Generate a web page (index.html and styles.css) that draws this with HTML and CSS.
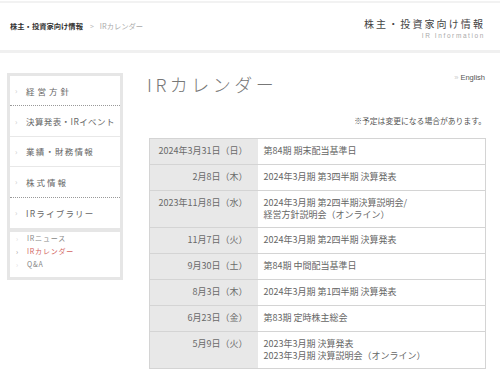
FILE: index.html
```html
<!DOCTYPE html>
<html lang="ja">
<head>
<meta charset="utf-8">
<title>IRカレンダー</title>
<link rel="stylesheet" href="styles.css">
</head>
<body>
<header class="header">
  <div class="crumbs">
    <a class="crumb-home">株主・投資家向け情報</a>
    <span class="crumb-sep">&gt;</span>
    <span class="crumb-current">IRカレンダー</span>
  </div>
  <div class="brand">
    <div class="brand-ja">株主・投資家向け情報</div>
    <div class="brand-en">IR Information</div>
  </div>
</header>
<div class="page">
  <nav class="side">
    <ul class="side-main">
      <li class="side-item dotted wide"><span class="mark">›</span>経営方針</li>
      <li class="side-item solid narrow"><span class="mark">›</span>決算発表・IRイベント</li>
      <li class="side-item solid"><span class="mark">›</span>業績・財務情報</li>
      <li class="side-item dotted mid"><span class="mark">›</span>株式情報</li>
      <li class="side-item"><span class="mark">›</span>IRライブラリー</li>
    </ul>
    <ul class="side-sub">
      <li class="sub-item"><span class="submark">›</span>IRニュース</li>
      <li class="sub-item active"><span class="submark">›</span>IRカレンダー</li>
      <li class="sub-item"><span class="submark">›</span>Q&amp;A</li>
    </ul>
  </nav>
  <main class="content">
    <div class="title-row">
      <h1 class="title">IRカレンダー</h1>
      <a class="lang"><span class="lang-mark">»</span> English</a>
    </div>
    <p class="note">※予定は変更になる場合があります。</p>
    <table class="cal">
      <tr><th>2024年3月31日（日）</th><td>第84期 期末配当基準日</td></tr>
      <tr><th>2月8日（木）</th><td>2024年3月期 第3四半期 決算発表</td></tr>
      <tr class="tall"><th>2023年11月8日（水）</th><td>2024年3月期 第2四半期決算説明会/<br>経営方針説明会（オンライン）</td></tr>
      <tr><th>11月7日（火）</th><td>2024年3月期 第2四半期 決算発表</td></tr>
      <tr><th>9月30日（土）</th><td>第84期 中間配当基準日</td></tr>
      <tr><th>8月3日（木）</th><td>2024年3月期 第1四半期 決算発表</td></tr>
      <tr><th>6月23日（金）</th><td>第83期 定時株主総会</td></tr>
      <tr class="tall"><th>5月9日（火）</th><td>2023年3月期 決算発表<br>2023年3月期 決算説明会（オンライン）</td></tr>
    </table>
  </main>
</div>
</body>
</html>
```

FILE: styles.css
```css
* { box-sizing: border-box; }
html, body { margin: 0; padding: 0; background: #fff; }
body {
  font-family: "Noto Sans CJK JP", "Noto Sans", sans-serif;
  color: #555;
  width: 500px;
  height: 388px;
  overflow: hidden;
}
ul { list-style: none; margin: 0; padding: 0; }

.header {
  border-top: 2px solid #f2f2f2;
  border-bottom: 3px solid #f0f0f0;
  height: 52px;
  margin-top: 1px;
  display: flex;
  justify-content: space-between;
  align-items: flex-start;
  padding: 0 15px 0 10px;
}
.crumbs {
  margin-top: 17px;
  font-size: 7.3px;
  line-height: 12px;
  display: flex;
  align-items: center;
}
.crumb-home { color: #333; font-weight: bold; }
.crumb-sep { color: #bbb; margin: 0 6px 0 7px; font-size: 7px; }
.crumb-current { color: #aaa; }

.brand { margin-top: 14px; text-align: right; }
.brand-ja {
  font-size: 10px;
  letter-spacing: 2.1px;
  color: #444;
  line-height: 14px;
}
.brand-en {
  font-family: "Liberation Sans", sans-serif;
  font-size: 6.5px;
  letter-spacing: 1.6px;
  color: #aaa;
  line-height: 10px;
}

.page {
  display: flex;
  align-items: flex-start;
  padding: 20px 14px 0 7px;
}

.side {
  width: 116px;
  flex: none;
  background: #e6e6e6;
  padding: 3px;
  display: flex;
  flex-direction: column;
  gap: 4px;
}
.side-main { background: #fff; }
.side-item {
  height: 30.4px;
  display: flex;
  align-items: center;
  padding-left: 5px;
  font-size: 8.5px;
  letter-spacing: 1.2px;
  color: #666;
  white-space: nowrap;
}
.side-item.wide { letter-spacing: 3px; }
.side-item.mid { letter-spacing: 2px; }
.side-item.narrow { letter-spacing: 0.4px; }
.side-item.dotted { border-bottom: 1px dotted #999; }
.side-item.solid { border-bottom: 1px solid #e8e8e8; }
.mark {
  color: #ccc;
  width: 11px;
  flex: none;
  letter-spacing: 0;
  font-size: 8px;
}

.side-sub { background: #fff; padding: 0 0 6px 6px; }
.sub-item {
  font-size: 7px;
  line-height: 13px;
  letter-spacing: 0.8px;
  color: #888;
  display: flex;
  align-items: center;
}
.submark {
  width: 11px;
  flex: none;
  color: #ddd;
  letter-spacing: 0;
}
.sub-item.active { color: #d2655f; }
.sub-item.active .submark { color: #999; }

.content {
  flex: 1;
  margin-left: 24px;
  min-width: 0;
}
.title-row {
  display: flex;
  justify-content: space-between;
  align-items: flex-start;
}
.title {
  margin: 0;
  font-size: 18px;
  font-weight: 300;
  letter-spacing: 3.5px;
  color: #777;
  line-height: 22px;
}
.lang {
  font-family: "Liberation Sans", sans-serif;
  font-size: 7.5px;
  color: #555;
  margin-right: 1px;
}
.lang-mark { color: #ccc; }

.note {
  margin: 20px 0 0 0;
  text-align: right;
  font-size: 7.8px;
  line-height: 12px;
  color: #555;
}

.cal {
  margin: 11px 0 0 2px;
  width: calc(100% - 2px);
  border-collapse: collapse;
  border: 1px solid #d4d4d4;
  font-size: 9px;
  line-height: 12.5px;
  color: #666;
}
.cal tr { height: 26px; border-bottom: 1px solid #d4d4d4; }
.cal tr.tall { height: 37px; }
.cal th {
  width: 108px;
  background: #e8e8e8;
  font-weight: normal;
  text-align: right;
  padding: 0 10px 0 0;
  color: #6a6a6a;
  white-space: nowrap;
}
.cal tr.tall th { vertical-align: top; padding-top: 6px; }
.cal td {
  padding: 0 0 0 6px;
  background: #fff;
}
```
